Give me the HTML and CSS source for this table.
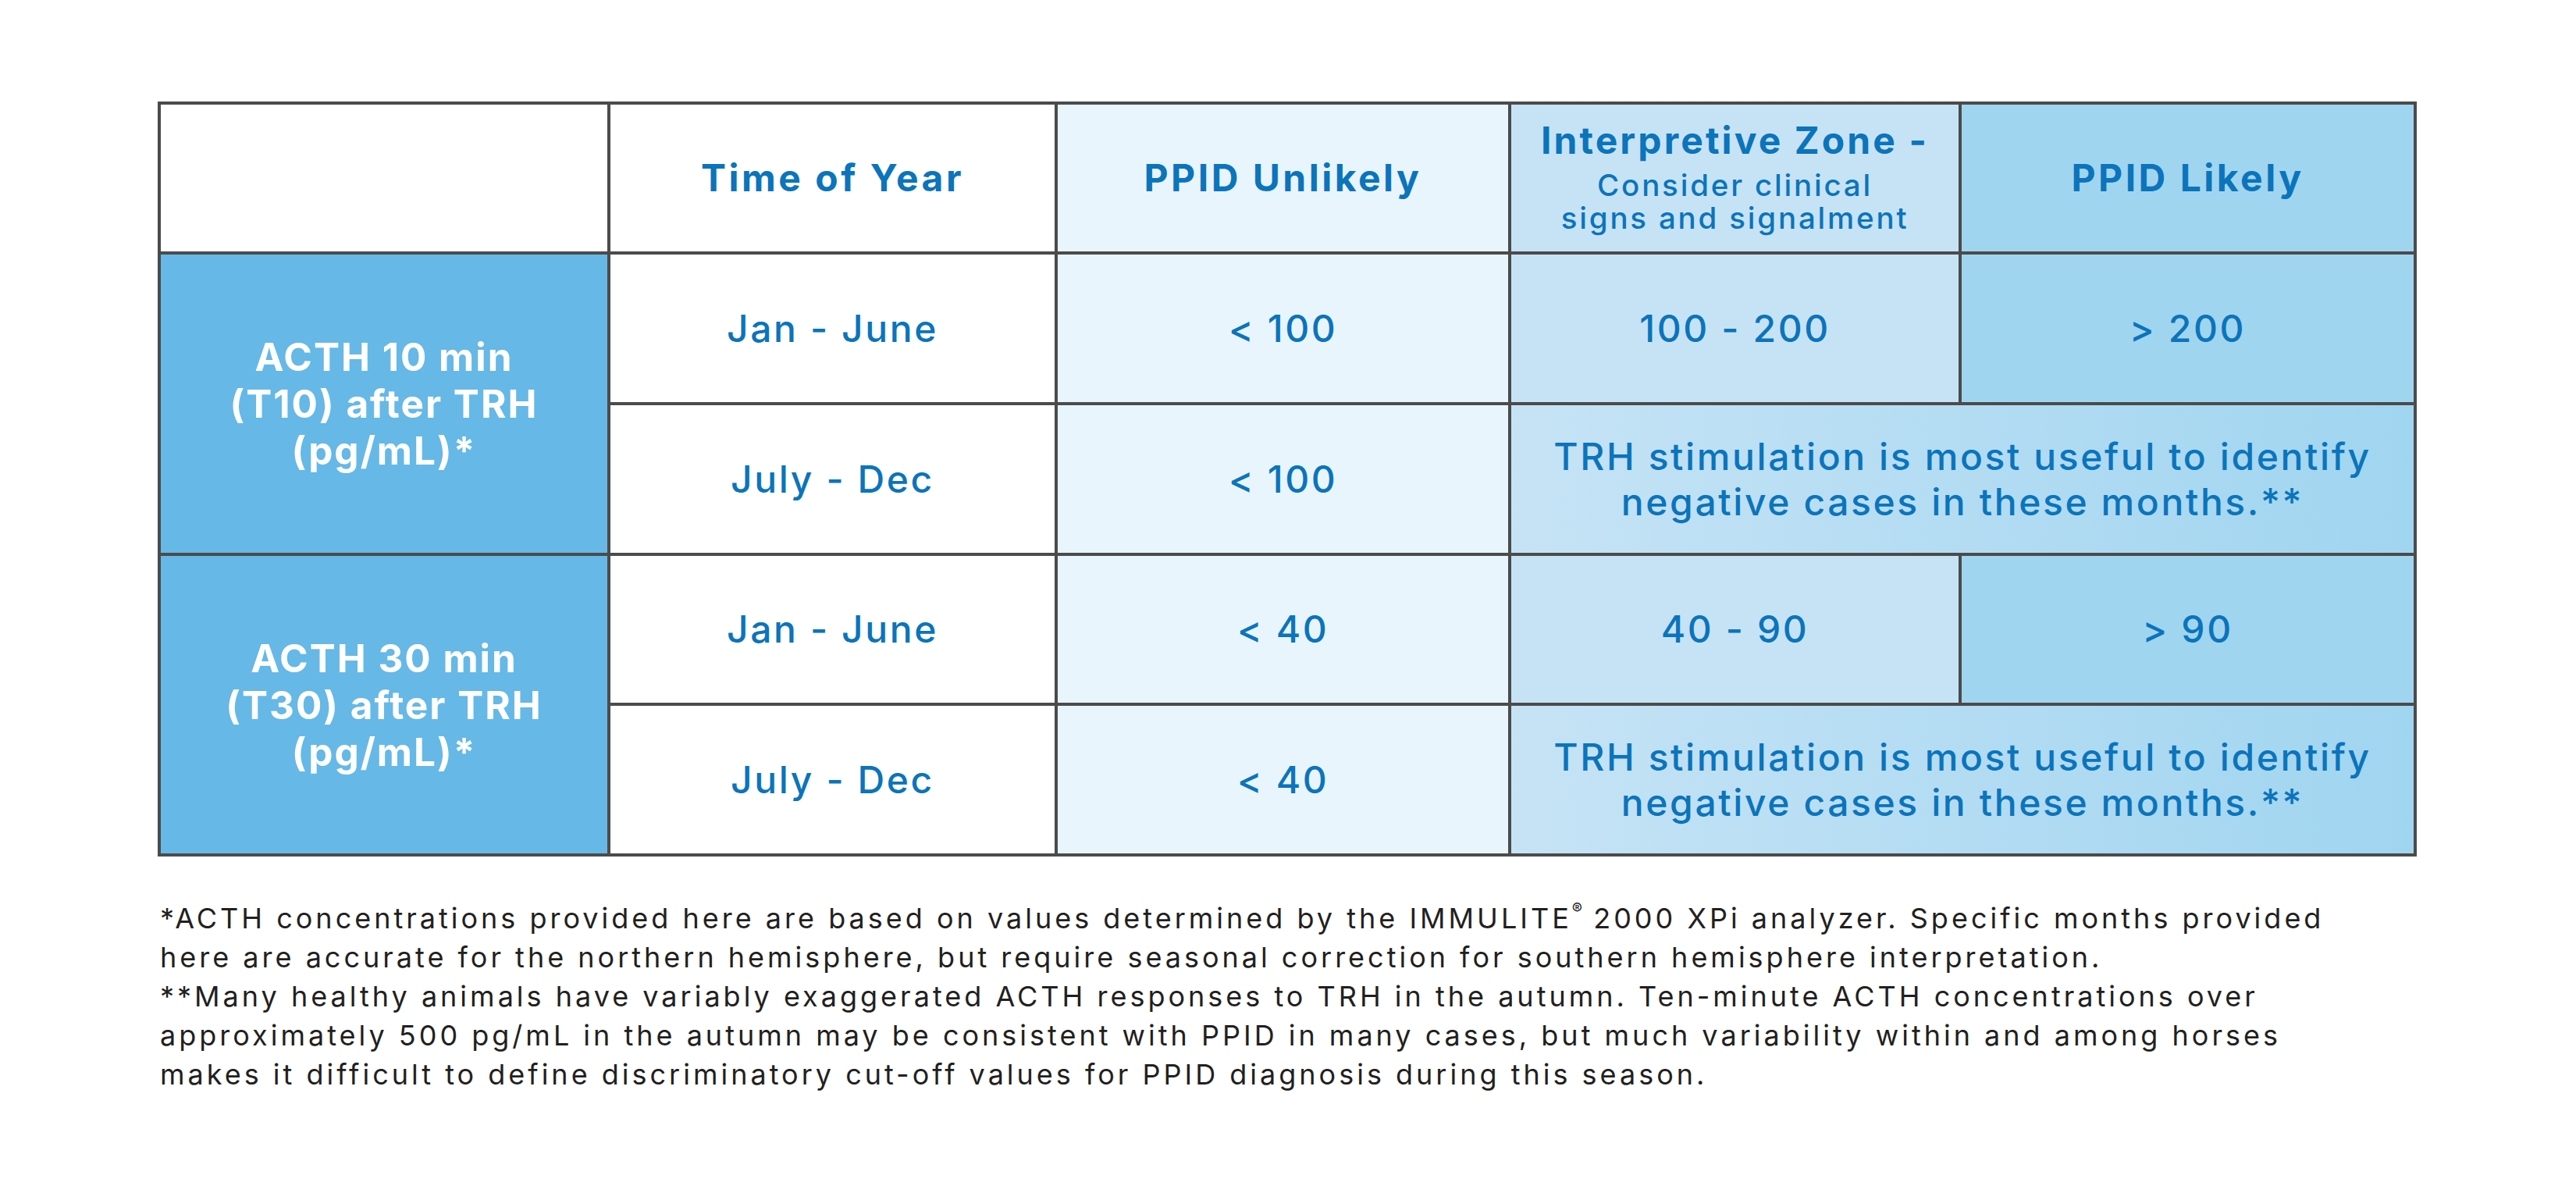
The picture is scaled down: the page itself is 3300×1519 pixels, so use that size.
FILE: index.html
```html
<!DOCTYPE html>
<html lang="en">
<head>
<meta charset="utf-8">
<title>ACTH TRH stimulation interpretation</title>
<link rel="stylesheet" href="styles.css">
</head>
<body>
<main class="page">
  <div class="grid">
    <div class="cell c-blank"></div>
    <div class="cell c-white head">Time of Year</div>
    <div class="cell c-unlikely head">PPID Unlikely</div>
    <div class="cell c-zone head zone-head">
      <div class="zone-title">Interpretive Zone -</div>
      <div class="zone-sub">Consider clinical<br>signs and signalment</div>
    </div>
    <div class="cell c-likely head">PPID Likely</div>

    <div class="cell c-side side span2">ACTH 10 min<br>(T10) after TRH<br>(pg/mL)*</div>
    <div class="cell c-white val">Jan - June</div>
    <div class="cell c-unlikely val">&lt; 100</div>
    <div class="cell c-zone val">100 - 200</div>
    <div class="cell c-likely val">&gt; 200</div>

    <div class="cell c-white val">July - Dec</div>
    <div class="cell c-unlikely val">&lt; 100</div>
    <div class="cell c-grad val note span-cols">TRH stimulation is most useful to identify<br>negative cases in these months.**</div>

    <div class="cell c-side side span2">ACTH 30 min<br>(T30) after TRH<br>(pg/mL)*</div>
    <div class="cell c-white val">Jan - June</div>
    <div class="cell c-unlikely val">&lt; 40</div>
    <div class="cell c-zone val">40 - 90</div>
    <div class="cell c-likely val">&gt; 90</div>

    <div class="cell c-white val">July - Dec</div>
    <div class="cell c-unlikely val">&lt; 40</div>
    <div class="cell c-grad val note span-cols">TRH stimulation is most useful to identify<br>negative cases in these months.**</div>
  </div>

  <p class="foot">*ACTH concentrations provided here are based on values determined by the IMMULITE<sup class="reg">®</sup> 2000 XPi analyzer. Specific months provided<br>here are accurate for the northern hemisphere, but require seasonal correction for southern hemisphere interpretation.<br>**Many healthy animals have variably exaggerated ACTH responses to TRH in the autumn. Ten-minute ACTH concentrations over<br>approximately 500 pg/mL in the autumn may be consistent with PPID in many cases, but much variability within and among horses<br>makes it difficult to define discriminatory cut-off values for PPID diagnosis during this season.</p>
</main>
</body>
</html>
```

FILE: styles.css
```css
html, body {
  margin: 0;
  padding: 0;
  background: #ffffff;
}

body {
  font-family: Inter, "Open Sans", "DejaVu Sans", sans-serif;
  color: #0b74bb;
}

.page {
  padding: 130px 0 0 202px;
}

.grid {
  display: grid;
  grid-template-columns: 572px 569px 577px 573px 579px;
  grid-template-rows: 188px 189px 189px 188px 189px;
  gap: 4px;
  width: fit-content;
  border: 4px solid #4b4b4b;
  background: #4b4b4b;
}

.cell {
  display: flex;
  align-items: center;
  justify-content: center;
  text-align: center;
  white-space: nowrap;
}

.c-blank, .c-white { background: #ffffff; }
.c-unlikely { background: #e8f5fd; }
.c-zone { background: #c6e3f5; }
.c-likely { background: #a0d5f0; }
.c-side { background: #66b8e6; }
.c-grad { background: linear-gradient(90deg, #c6e3f5 0%, #a0d5f0 100%); }

.span2 { grid-row: span 2; }
.span-cols { grid-column: span 2; }

.head {
  font-size: 48px;
  font-weight: 700;
  line-height: 1;
  letter-spacing: 3.5px;
}

.zone-head {
  flex-direction: column;
}

.zone-title {
  font-size: 48px;
  font-weight: 700;
  line-height: 48px;
  letter-spacing: 3.1px;
}

.zone-sub {
  font-size: 38.5px;
  font-weight: 500;
  line-height: 42px;
  margin-top: 12px;
  letter-spacing: 2.8px;
}

.val {
  font-size: 48px;
  font-weight: 500;
  line-height: 58px;
  letter-spacing: 2.6px;
}

.side {
  color: #ffffff;
  font-size: 49.5px;
  font-weight: 700;
  line-height: 60px;
  letter-spacing: 2px;
}

.foot {
  margin: 54px 0 0 3px;
  font-size: 36px;
  line-height: 50px;
  font-weight: 400;
  color: #231f20;
  white-space: nowrap;
  letter-spacing: 4px;
}

.reg {
  font-size: 0.55em;
  line-height: 0;
  vertical-align: 0.9em;
  letter-spacing: 0;
}
```
